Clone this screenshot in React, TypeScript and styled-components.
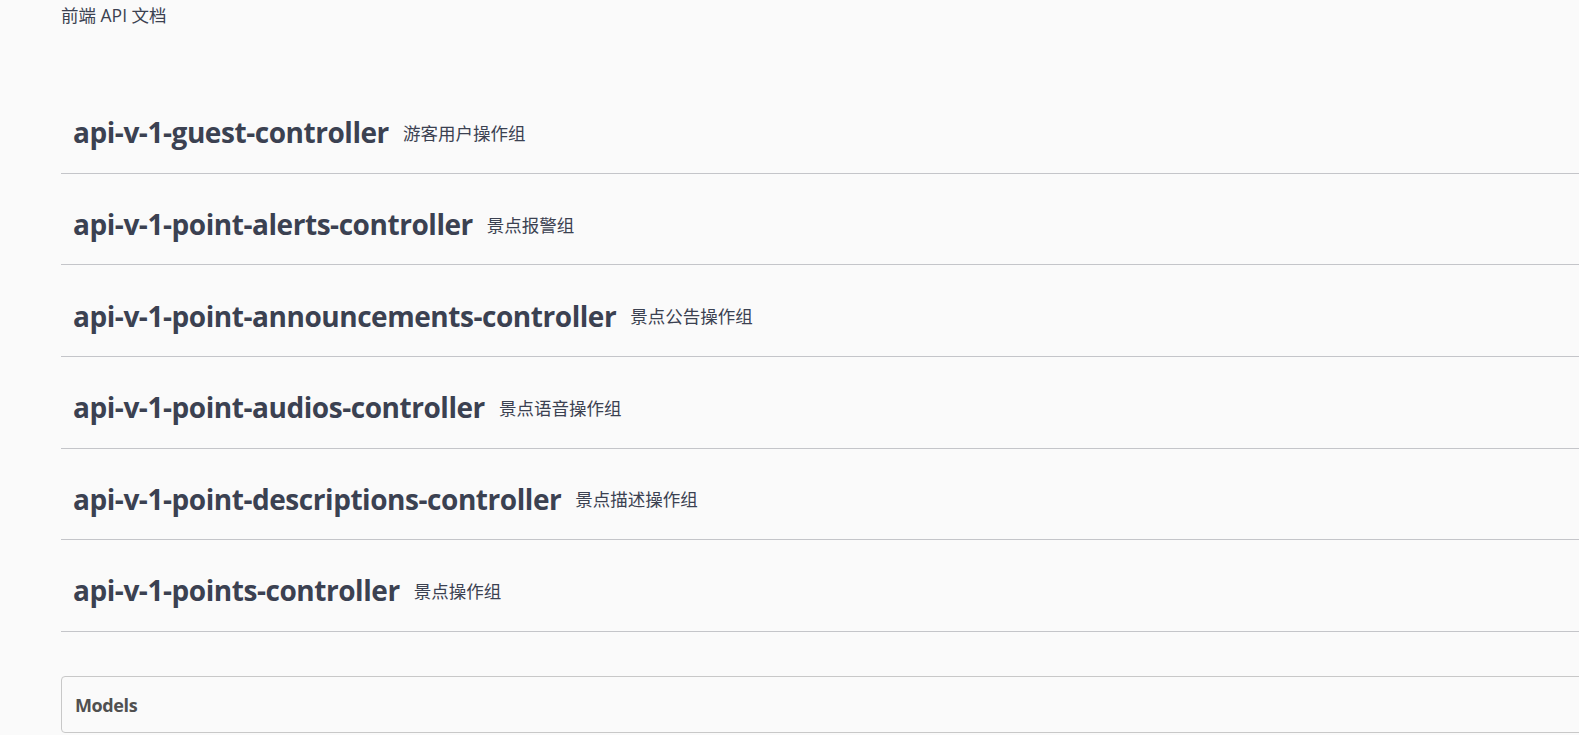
import React from "react";
import styled, { createGlobalStyle } from "styled-components";

const Global = createGlobalStyle`
  html, body {
    margin: 0;
    padding: 0;
    background: #fafafa;
    overflow: hidden;
  }
  body {
    font-family: "Open Sans", "Noto Sans CJK SC", sans-serif;
    color: #3b4151;
  }
`;

const Page = styled.div`
  width: 1640px;
  padding-left: 61px;
  box-sizing: border-box;
`;

const Title = styled.div`
  font-family: "Open Sans", "Noto Sans CJK SC", sans-serif;
  font-size: 17.5px;
  line-height: 30px;
  color: #3b4151;
  height: 82.2px;
`;

const TagList = styled.div`
  display: flex;
  flex-direction: column;
`;

const TagRow = styled.div`
  display: flex;
  align-items: center;
  height: 91.6px;
  box-sizing: border-box;
  padding: 10px 0 0 12px;
  border-bottom: 1px solid #c4c5c9;
  gap: 14px;
`;

const TagName = styled.span`
  font-family: "Open Sans", sans-serif;
  font-weight: 700;
  font-size: 28px;
  color: #3b4151;
  letter-spacing: -0.45px;
`;

const TagDesc = styled.span`
  font-family: "Open Sans", "Noto Sans CJK SC", sans-serif;
  font-size: 17.5px;
  color: #3b4151;
`;

const Models = styled.section`
  margin-top: 44.5px;
  height: 57px;
  box-sizing: border-box;
  border: 1px solid #c8c8c8;
  border-radius: 4px;
  display: flex;
  align-items: center;
  padding-left: 13px;
`;

const ModelsTitle = styled.h4`
  margin: 0;
  font-family: "Open Sans", sans-serif;
  font-size: 18px;
  font-weight: 700;
  color: #505050;
  letter-spacing: -0.4px;
`;

const tags = [
  ["api-v-1-guest-controller", "游客用户操作组"],
  ["api-v-1-point-alerts-controller", "景点报警组"],
  ["api-v-1-point-announcements-controller", "景点公告操作组"],
  ["api-v-1-point-audios-controller", "景点语音操作组"],
  ["api-v-1-point-descriptions-controller", "景点描述操作组"],
  ["api-v-1-points-controller", "景点操作组"],
];

export default function App() {
  return (
    <>
      <Global />
      <Page>
        <Title>前端 API 文档</Title>
        <TagList>
          {tags.map(([name, desc]) => (
            <TagRow key={name}>
              <TagName>{name}</TagName>
              <TagDesc>{desc}</TagDesc>
            </TagRow>
          ))}
        </TagList>
        <Models>
          <ModelsTitle>Models</ModelsTitle>
        </Models>
      </Page>
    </>
  );
}
